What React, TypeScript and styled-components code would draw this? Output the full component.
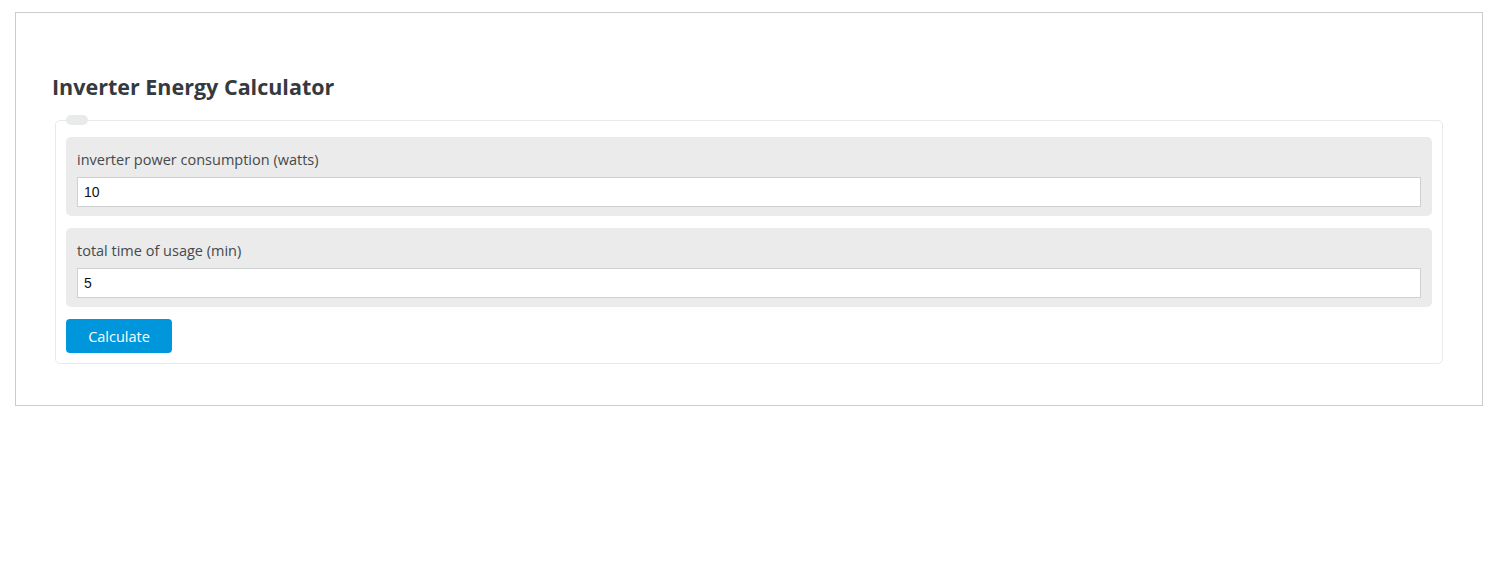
import React from "react";
import styled, { createGlobalStyle } from "styled-components";

const GlobalStyle = createGlobalStyle`
  body {
    margin: 8px;
    background: #fff;
    font-family: "Open Sans", "Noto Sans", sans-serif;
  }
`;

const Card = styled.div`
  margin: 4px 7px 0 7px;
  border: 1px solid #cccccc;
  padding: 59px 39px 41px 39px;
  h2 {
    margin: 0 0 13px -3px;
    font-size: 21.5px;
    line-height: 30px;
    font-weight: 700;
    color: #353a40;
  }
`;

const Fieldset = styled.fieldset`
  margin: 0;
  border: 1px solid #e8e9e9;
  border-radius: 5px;
  padding: 12px 10px 10px 10px;
  display: flex;
  flex-direction: column;
  gap: 12px;
  legend {
    width: 22px;
    height: 10px;
    padding: 0;
    margin: 0;
    border-radius: 5px;
    background: #e9eaea;
  }
`;

const Row = styled.div`
  background: #eaebea;
  border-radius: 5px;
  padding: 13px 11px 9px 11px;
  display: flex;
  flex-direction: column;
  gap: 8px;
  label {
    font-size: 14.5px;
    line-height: 19px;
    color: #45494d;
  }
  input {
    box-sizing: border-box;
    height: 30px;
    width: 100%;
    border: 1px solid #cfd0d0;
    padding: 0 6px;
    font-family: "Liberation Sans", Arial, sans-serif;
    font-size: 14px;
    color: #111;
    background: #fff;
    outline: none;
  }
`;

const Button = styled.button`
  align-self: flex-start;
  width: 106px;
  height: 34px;
  border: none;
  border-radius: 4px;
  background: #0096db;
  color: #fff;
  font-family: "Open Sans", "Noto Sans", sans-serif;
  font-size: 14.5px;
  cursor: pointer;
`;

const fields = [
  { label: "inverter power consumption (watts)", value: "10" },
  { label: "total time of usage (min)", value: "5" },
];

const App = () => {
  return (
    <>
      <GlobalStyle />
      <Card>
        <h2>Inverter Energy Calculator</h2>
        <Fieldset>
          <legend></legend>
          {fields.map((f) => (
            <Row key={f.label}>
              <label>{f.label}</label>
              <input type="text" defaultValue={f.value} />
            </Row>
          ))}
          <Button>Calculate</Button>
        </Fieldset>
      </Card>
    </>
  );
};

export default App;
